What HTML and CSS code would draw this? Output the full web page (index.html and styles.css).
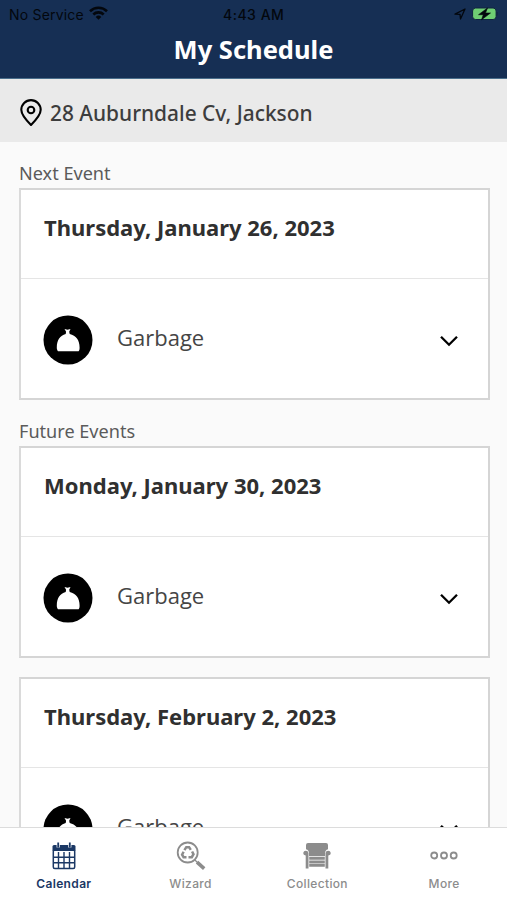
FILE: index.html
```html
<!DOCTYPE html>
<html lang="en">
<head>
<meta charset="utf-8">
<title>My Schedule</title>
<link rel="stylesheet" href="styles.css">
</head>
<body>
<svg width="0" height="0" class="defs">
  <symbol id="bag" viewBox="0 0 50 50">
    <circle cx="25" cy="25" r="24.5"/>
    <path fill="#fff" d="M21.500 14 24.500 14.700l3-.7-1.300 2.700.5 2.300c6.300 1.500 9.900 6 9.900 13.500 0 1.800-.2 2.700-1 3.700H15c-.8-1-1.200-2-1.200-3.700 0-7.500 3.300-12 8.900-13.500l.4-2.300z"/>
  </symbol>
  <symbol id="chevron" viewBox="0 0 20 12">
    <path d="M2 1.700 10 9.700 18 1.700" fill="none" stroke="#000" stroke-width="2.300"/>
  </symbol>
</svg>
<div class="app">
  <header class="header">
    <div class="status">
      <span class="carrier">No Service</span>
      <svg class="wifi" width="19" height="14" viewBox="0 0 19 14"><g fill="none" stroke="#03070d" stroke-width="2.600"><path d="M1 5.200a12.200 12.200 0 0 1 17 0"/><path d="M4.300 8.500a7.500 7.500 0 0 1 10.400 0"/></g><path d="M9.500 13.700 6.700 10.900a4 4 0 0 1 5.600 0z" fill="#03070d"/></svg>
      <span class="time">4:43 AM</span>
      <svg class="locate" width="12" height="12" viewBox="0 0 12 12"><path d="M1 6.200 11 1 6.500 11 6 6.300z" fill="none" stroke="#03070d" stroke-width="1.300" stroke-linejoin="round"/></svg>
      <svg class="battery" width="26" height="14" viewBox="0 0 26 14"><rect x=".6" y="1" width="23.500" height="11.500" rx="3" fill="#6fcf73" stroke="#10253f"/><path d="M25.100 5v3.500" stroke="#10253f"/><path d="M15.500 1 6.500 7.700h4.800L9.500 12.800l9-6.800h-5z" fill="#03070d" stroke="#03070d" stroke-width=".6"/></svg>
    </div>
    <h1 class="title">My Schedule</h1>
  </header>
  <div class="address">
    <svg class="pin" width="22" height="28" viewBox="0 0 22 28" fill="none" stroke="#000" stroke-width="2.100"><path d="M11 26C6.500 21.500 1.300 16 1.300 10.800a9.700 9.700 0 0 1 19.400 0C20.700 16 15.500 21.500 11 26z" stroke-linejoin="round"/><circle cx="11" cy="11" r="3.300"/></svg>
    <span>28 Auburndale Cv, Jackson</span>
  </div>
  <main class="content">
    <h2 class="label">Next Event</h2>
    <section class="card">
      <h3 class="date">Thursday, January 26, 2023</h3>
      <div class="row"><svg class="bag"><use href="#bag"/></svg><span class="kind">Garbage</span><svg class="chevron"><use href="#chevron"/></svg></div>
    </section>
    <h2 class="label">Future Events</h2>
    <section class="card">
      <h3 class="date">Monday, January 30, 2023</h3>
      <div class="row"><svg class="bag"><use href="#bag"/></svg><span class="kind">Garbage</span><svg class="chevron"><use href="#chevron"/></svg></div>
    </section>
    <section class="card next">
      <h3 class="date">Thursday, February 2, 2023</h3>
      <div class="row"><svg class="bag"><use href="#bag"/></svg><span class="kind">Garbage</span><svg class="chevron"><use href="#chevron"/></svg></div>
    </section>
  </main>
  <nav class="tabs">
    <a class="tab active">
      <svg width="30" height="30" viewBox="0 0 30 30"><path fill="currentColor" d="M3.500 5.500q0-1.500 1.500-1.500h20q1.500 0 1.500 1.500V10h-23z"/><rect x="4.300" y="9" width="21.400" height="18.500" rx="1.500" fill="none" stroke="currentColor" stroke-width="1.500"/><path d="M9.500 11v16M15 11v16M20.500 11v16M4 16.200h22M4 21.700h22" stroke="currentColor" stroke-width="1.400"/><path d="M9.200 1v5.500M20.800 1v5.500" stroke="#fff" stroke-width="3.200"/><path d="M9.200 1.500v5M20.800 1.500v5" stroke="currentColor" stroke-width="1.800"/></svg>
      <span>Calendar</span>
    </a>
    <a class="tab">
      <svg width="30" height="30" viewBox="0 0 30 30" fill="none" stroke="currentColor"><circle cx="11.700" cy="11.500" r="10" stroke-width="1.800"/><path d="M21 21.200l7.200 6.500" stroke-width="3.600"/><path d="M18.700 18.700l3 3" stroke-width="1.300"/><g stroke-width="2.500"><path d="M8.400 9.200 10.300 6.200h2.800l1.700 2.700"/><path d="M16.100 10.500l1.400 2.700-1.700 3h-3.300"/><path d="M10.500 16.200H7.600l-1.500-2.500 1.500-2.900"/></g></svg>
      <span>Wizard</span>
    </a>
    <a class="tab">
      <svg width="30" height="30" viewBox="0 0 30 30" fill="currentColor"><path d="M4 4q0-2 2-2h18q2 0 2 2v4.300q-3 .8-3 4.200v2.500h-16v-2.500Q7 9.100 4 8.300z"/><path d="M1.200 12a2.700 2.700 0 0 1 5.300 0v15.500H3.700V14.500Q1.200 14 1.200 12zM28.800 12a2.700 2.700 0 0 0-5.300 0v15.500h2.800V14.500Q28.800 14 28.800 12zM7.200 15.700h15.600v3h-15.600zM7.200 19.400h15.600v2.500h-15.600zM7.200 22.600h15.600v3.200h-15.600z"/></svg>
      <span>Collection</span>
    </a>
    <a class="tab">
      <svg width="30" height="30" viewBox="0 0 30 30" fill="none" stroke="currentColor" stroke-width="1.800"><circle cx="5.200" cy="14.500" r="3"/><circle cx="15" cy="14.500" r="3"/><circle cx="24.700" cy="14.500" r="3"/></svg>
      <span>More</span>
    </a>
  </nav>
</div>
</body>
</html>
```
FILE: styles.css
```css
* { box-sizing: border-box; margin: 0; padding: 0; }
body { font-family: "Noto Sans", "Open Sans", sans-serif; background: #fafafa; }
.defs { display: block; }
.app { display: flex; flex-direction: column; height: 900px; width: 507px; overflow: hidden; }
.header { flex: none; height: 79px; background: #162f54; border-bottom: 1px solid #4a6f8c; }
.status { display: flex; align-items: center; height: 28px; padding: 0 9px; font-family: Inter, sans-serif; font-size: 14px; color: #03070d; }
.carrier { width: 75px; white-space: nowrap; letter-spacing: .2px; }
.wifi { margin-left: 5px; margin-top: -3px; }
.time { margin-left: 115px; width: 62px; font-weight: 500; white-space: nowrap; letter-spacing: .5px; }
.locate { margin-left: auto; margin-right: 6px; }
.title { font-size: 25.500px; line-height: 43px; text-align: center; color: #fff; font-weight: 700; }
.address { flex: none; display: flex; align-items: center; height: 63px; padding: 4px 20px 0; background: #eaeaea; color: #3d3d3d; font-size: 20.900px; font-weight: 500; white-space: nowrap; }
.pin { margin-right: 8px; }
.content { flex: 1; min-height: 0; overflow: hidden; padding: 16px 17px 0 19px; }
.label { height: 30px; font-size: 18.100px; line-height: 31px; font-weight: 400; color: #5b5b5b; }
.card { height: 212px; margin-bottom: 16px; background: #fff; border: 2px solid #d5d5d5; border-left-color: #dadada; }
.next { margin-top: 19px; }
.date { height: 89px; padding: 0 23px; border-bottom: 1px solid #e5e5e5; line-height: 75px; font-size: 22px; font-weight: 700; color: #303030; white-space: nowrap; }
.row { display: flex; align-items: center; height: 119px; padding: 0 29px 0 22px; }
.bag { width: 50px; height: 50px; margin-top: 2px; }
.kind { margin-left: 24px; font-family: "Open Sans", sans-serif; font-size: 22px; color: #454545; line-height: 30px; margin-top: -4px; }
.chevron { width: 20px; height: 12px; margin-left: auto; margin-top: 5px; }
.tabs { flex: none; display: flex; height: 73px; background: #fff; border-top: 1px solid #dcdcdc; }
.tab { flex: 1; display: flex; flex-direction: column; align-items: center; padding: 13px 0 0 1px; color: #8c8c8c; font-family: Inter, sans-serif; font-size: 12px; font-weight: 500; line-height: 16px; letter-spacing: .35px; }
.tab span { margin-top: 5px; }
.active { color: #1b3865; font-weight: 600; }
```
